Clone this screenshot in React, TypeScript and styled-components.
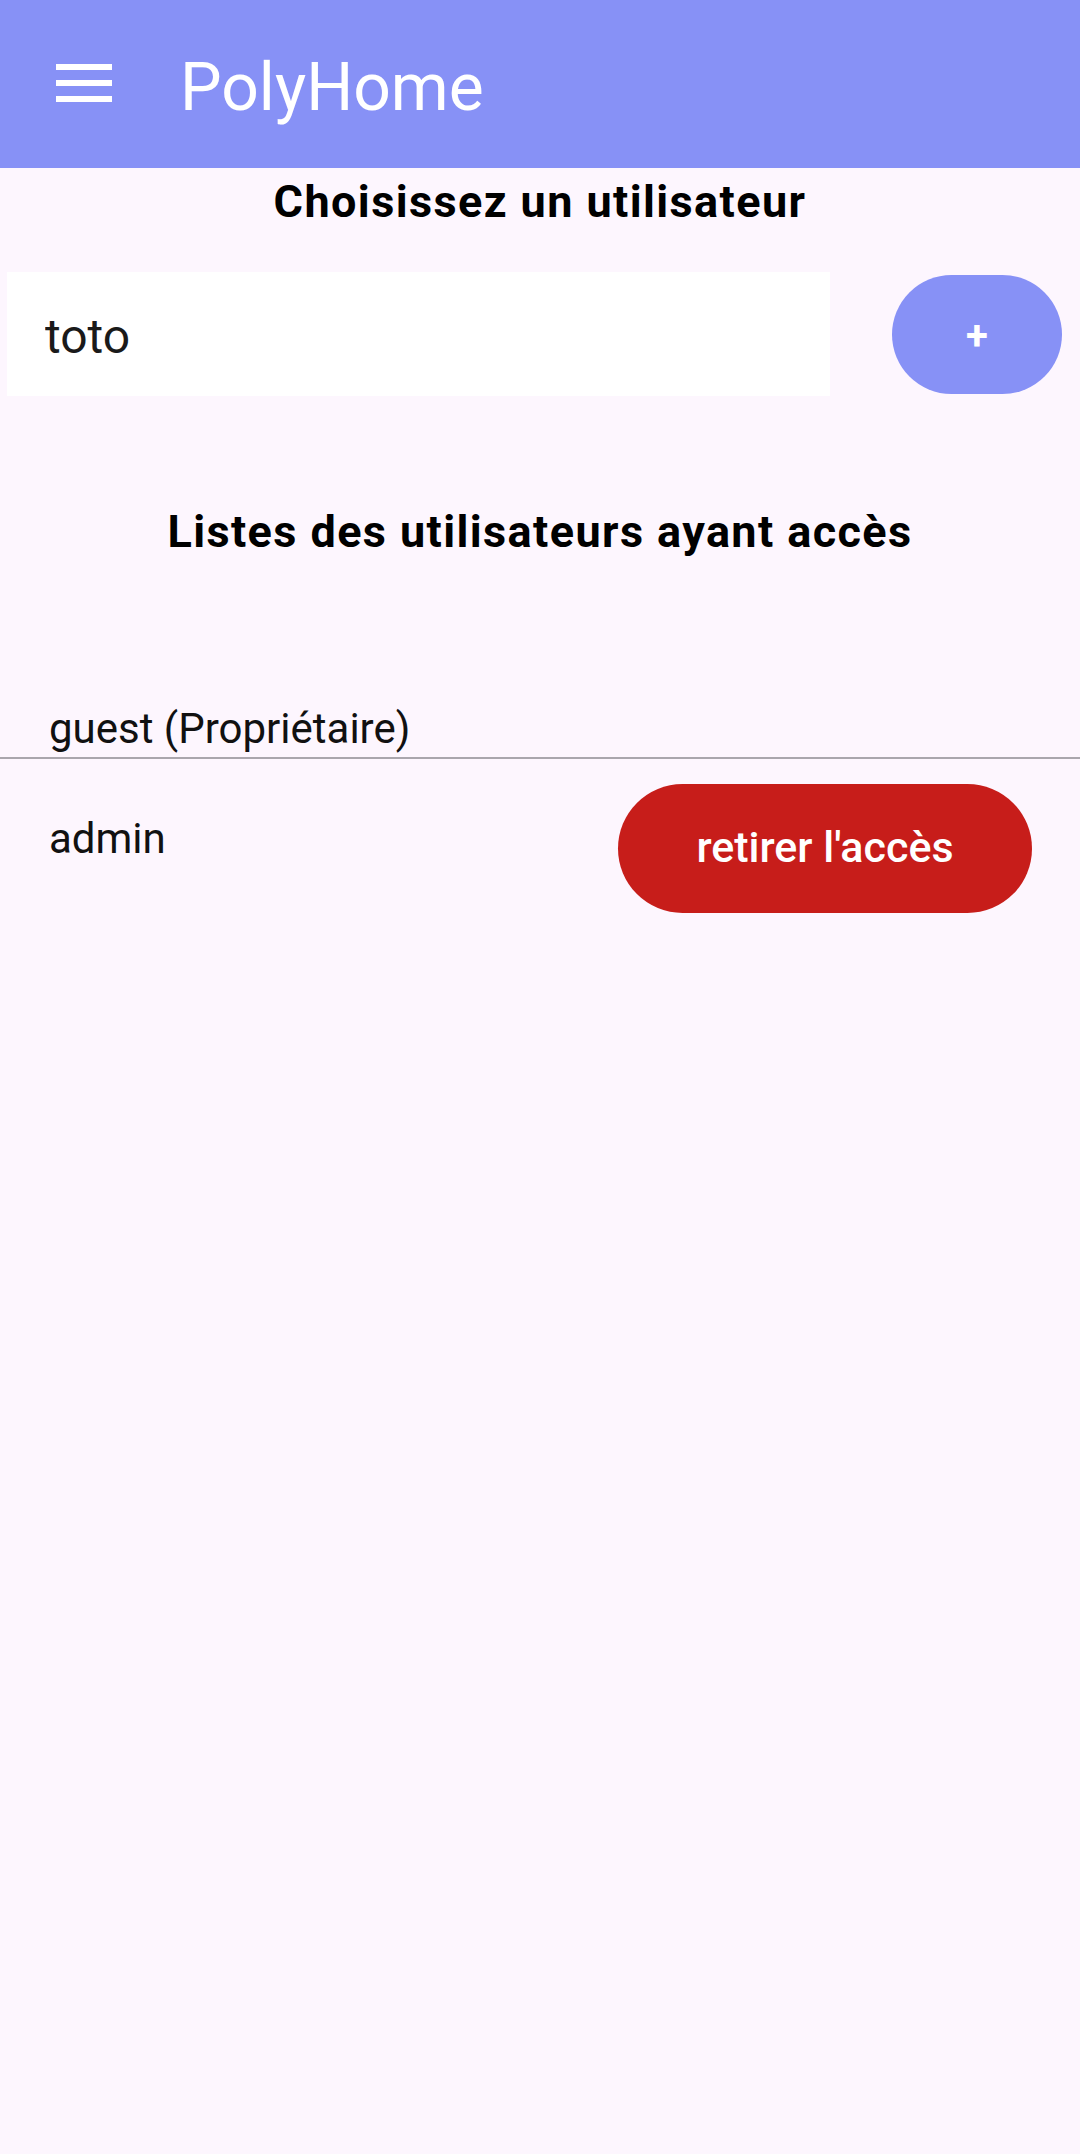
import React from "react";
import styled, { createGlobalStyle } from "styled-components";

const GlobalStyle = createGlobalStyle`
  html, body {
    margin: 0;
    padding: 0;
    background: #fdf6fe;
  }
  body {
    font-family: Roboto, "Noto Sans", sans-serif;
    color: #111111;
  }
  * { box-sizing: border-box; }
`;

const Page = styled.div`
  min-height: 2154px;
  background: #fdf6fe;
  display: flex;
  flex-direction: column;
`;

const AppBar = styled.header`
  height: 168px;
  background: #8791f6;
  display: flex;
  align-items: center;
  padding-left: 56px;
`;

const MenuButton = styled.button`
  border: none;
  background: transparent;
  padding: 0;
  width: 56px;
  height: 42px;
  display: flex;
  align-items: center;
  justify-content: center;
`;

const Title = styled.h1`
  margin: 7px 0 0 68px;
  font-family: Roboto, sans-serif;
  font-weight: 400;
  font-size: 66px;
  line-height: 1;
  color: #ffffff;
`;

const SectionTitle = styled.h2<{ $top: number }>`
  margin: ${(p) => p.$top}px 0 0;
  text-align: center;
  font-family: Roboto, sans-serif;
  font-weight: 700;
  font-size: 45px;
  letter-spacing: 1.4px;
  line-height: 50px;
  color: #000000;
`;

const InputRow = styled.div`
  display: flex;
  align-items: center;
  padding-left: 7px;
  margin-top: 45px;
`;

const UserInput = styled.input`
  width: 823px;
  height: 124px;
  border: none;
  outline: none;
  background: #ffffff;
  padding: 4px 0 0 38px;
  font-family: Roboto, sans-serif;
  font-size: 48px;
  color: #1a1a1a;
`;

const AddButton = styled.button`
  margin-left: 62px;
  width: 170px;
  height: 119px;
  border: none;
  border-radius: 60px;
  background: #8791f6;
  color: #ffffff;
  font-family: Roboto, sans-serif;
  font-weight: 700;
  font-size: 40px;
  display: flex;
  align-items: center;
  justify-content: center;
  padding: 2px 0 0;
`;

const List = styled.div`
  display: flex;
  flex-direction: column;
`;

const Row = styled.div<{ $divider?: boolean; $top: number }>`
  display: flex;
  justify-content: space-between;
  align-items: flex-start;
  padding-top: ${(p) => p.$top}px;
  border-bottom: ${(p) => (p.$divider ? "2px solid #aaa6ad" : "none")};
`;

const UserName = styled.span<{ $offset: number }>`
  font-family: Roboto, sans-serif;
  font-size: 42px;
  line-height: 50px;
  color: #111111;
  margin-left: 49px;
  margin-top: ${(p) => p.$offset}px;
  padding-bottom: 3px;
`;

const RemoveButton = styled.button`
  width: 414px;
  height: 129px;
  margin-right: 48px;
  border: none;
  border-radius: 65px;
  background: #c71d1a;
  color: #ffffff;
  font-family: Roboto, sans-serif;
  font-weight: 500;
  font-size: 43px;
  display: flex;
  align-items: center;
  justify-content: center;
  padding: 0 0 4px;
`;

const HamburgerIcon = () => (
  <svg width="56" height="42" viewBox="0 0 56 42">
    <rect x="0" y="1" width="56" height="6" fill="#ffffff" />
    <rect x="0" y="17" width="56" height="6" fill="#ffffff" />
    <rect x="0" y="33" width="56" height="6" fill="#ffffff" />
  </svg>
);

export default function App() {
  return (
    <>
      <GlobalStyle />
      <Page>
        <AppBar>
          <MenuButton aria-label="menu">
            <HamburgerIcon />
          </MenuButton>
          <Title>PolyHome</Title>
        </AppBar>
        <SectionTitle $top={9}>Choisissez un utilisateur</SectionTitle>
        <InputRow>
          <UserInput defaultValue="toto" />
          <AddButton>+</AddButton>
        </InputRow>
        <SectionTitle $top={111}>Listes des utilisateurs ayant accès</SectionTitle>
        <List>
          <Row $divider $top={147}>
            <UserName $offset={0}>guest (Propriétaire)</UserName>
          </Row>
          <Row $top={25}>
            <UserName $offset={30}>admin</UserName>
            <RemoveButton>retirer l'accès</RemoveButton>
          </Row>
        </List>
      </Page>
    </>
  );
}
